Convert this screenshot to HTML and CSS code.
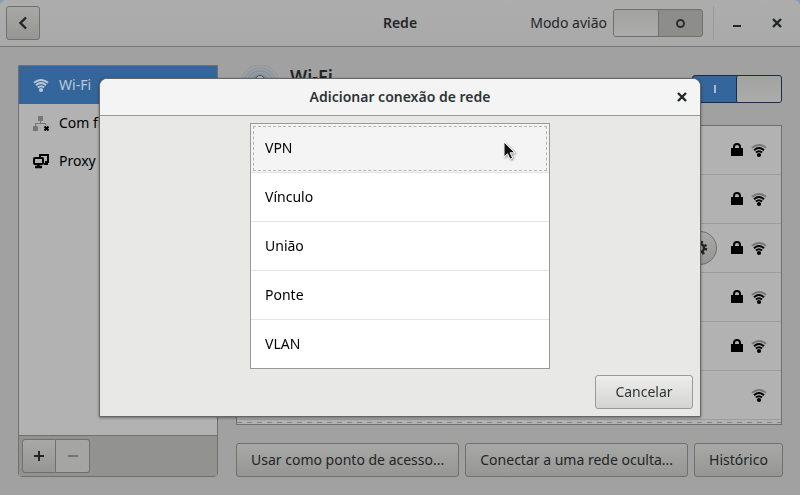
FILE: index.html
```html
<!DOCTYPE html>
<html lang="pt-BR">
<head>
<meta charset="utf-8">
<title>Rede</title>
<link rel="stylesheet" href="styles.css">
</head>
<body>
<svg class="defs" aria-hidden="true">
  <symbol id="wifi" viewBox="0 0 16 16">
    <circle cx="8" cy="13" r="2.100" fill="currentColor"/>
    <g fill="none" stroke="currentColor" stroke-width="2">
      <path d="M4.900 10.600Q8 8 11.100 10.600"/>
      <path d="M3 8.200Q8 3.900 13 8.200"/>
      <path class="outer" d="M1 5.700Q8 .2 15 5.700"/>
    </g>
  </symbol>
  <symbol id="lock" viewBox="0 0 14 16">
    <path d="M4 7V5a3 3 0 0 1 6 0v2" fill="none" stroke="currentColor" stroke-width="2"/>
    <path d="M1 6h12v8H1z" fill="currentColor"/>
  </symbol>
</svg>

<div class="window">
  <header class="titlebar">
    <div class="start">
      <button class="btn square" aria-label="Voltar"><svg width="16" height="16" viewBox="0 0 16 16"><path d="m11 2.500-5.500 5.500 5.500 5.500" fill="none" stroke="currentColor" stroke-width="2.400"/></svg></button>
    </div>
    <h1>Rede</h1>
    <div class="end">
      <label for="airplane">Modo avião</label>
      <input class="switch" type="checkbox" id="airplane">
      <span class="divider"></span>
      <button class="flat" aria-label="Minimizar"><svg width="16" height="16" viewBox="0 0 16 16"><path d="M4 11h8" stroke="currentColor" stroke-width="2"/></svg></button>
      <button class="flat" aria-label="Fechar janela"><svg width="16" height="16" viewBox="0 0 16 16"><path d="m4 4 8 8m0-8-8 8" stroke="currentColor" stroke-width="2.400"/></svg></button>
    </div>
  </header>

  <div class="content">
    <aside class="sidebar">
      <nav>
        <a class="selected" href="#"><svg width="16" height="16"><use href="#wifi"/></svg>Wi-Fi</a>
        <a href="#"><svg width="16" height="16" viewBox="0 0 16 16"><g fill="#777"><path d="M5 1h5v5H5zM0 11h5v5H0zM7 6h1v3H7zM2 8h11v1H2zM2 8h1v3H2zM12 8h1v2h-1z"/></g><path d="m11.500 11.500 4 4m0-4-4 4" stroke="#000" stroke-width="2"/></svg>Com fio</a>
        <a href="#"><svg width="16" height="16" viewBox="0 0 16 16" fill="none" stroke="#000" stroke-width="2"><path d="M7 4V2h8v7h-3"/><rect x="1" y="5" width="9" height="6" rx="1"/><path d="M2 14h7M5.500 11v3" stroke-width="2.400"/><path d="M11 11h4"/></svg>Proxy</a>
      </nav>
      <div class="toolbar">
        <button class="btn square add" aria-label="Adicionar"><svg width="16" height="16" viewBox="0 0 16 16"><path d="M3 8h10M8 3v10" stroke="currentColor" stroke-width="2"/></svg></button>
        <button class="btn square remove" aria-label="Remover" disabled><svg width="16" height="16" viewBox="0 0 16 16"><path d="M3 8h10" stroke="currentColor" stroke-width="2"/></svg></button>
      </div>
    </aside>

    <main>
      <div class="device">
        <svg width="48" height="48" viewBox="0 0 48 48" fill="none"><circle cx="24" cy="19" r="11" fill="#6c7f95" opacity=".45"/><circle cx="24" cy="19" r="8" fill="#4f6a8a" opacity=".55"/><g stroke="#71859c"><circle cx="24" cy="19" r="13" stroke-width="2" opacity=".5"/><circle cx="24" cy="19" r="16" stroke-width="2" opacity=".35"/><circle cx="24" cy="19" r="19" opacity=".35"/></g><circle cx="24" cy="15" r="4.500" fill="#b4b8bb" stroke="#3f4a55"/></svg>
        <h2>Wi-Fi</h2>
        <input class="switch" type="checkbox" checked aria-label="Wi-Fi">
      </div>
      <ul class="networks">
        <li><svg width="14" height="16"><use href="#lock"/></svg><svg width="16" height="16"><use href="#wifi"/></svg></li>
        <li><svg width="14" height="16"><use href="#lock"/></svg><svg width="16" height="16"><use href="#wifi"/></svg></li>
        <li><button class="btn gear" aria-label="Opções"><svg width="16" height="16" viewBox="0 0 16 16" fill="none" stroke="currentColor"><circle cx="8" cy="8" r="4" stroke-width="2.500"/><circle cx="8" cy="8" r="6" stroke-width="2.500" stroke-dasharray="2.300 2.410"/></svg></button><svg width="14" height="16"><use href="#lock"/></svg><svg width="16" height="16"><use href="#wifi"/></svg></li>
        <li><svg width="14" height="16"><use href="#lock"/></svg><svg width="16" height="16"><use href="#wifi"/></svg></li>
        <li><svg width="14" height="16"><use href="#lock"/></svg><svg width="16" height="16"><use href="#wifi"/></svg></li>
        <li><svg width="16" height="16"><use href="#wifi"/></svg></li>
      </ul>
      <div class="actions">
        <button class="btn">Usar como ponto de acesso...</button>
        <button class="btn">Conectar a uma rede oculta...</button>
        <button class="btn">Histórico</button>
      </div>
    </main>
  </div>
</div>

<div class="overlay">
  <section class="dialog" role="dialog" aria-labelledby="dialog-title">
    <header>
      <h2 id="dialog-title">Adicionar conexão de rede</h2>
      <button class="flat" aria-label="Fechar"><svg width="16" height="16" viewBox="0 0 16 16"><path d="m4 4 8 8m0-8-8 8" stroke="currentColor" stroke-width="2.400"/></svg></button>
    </header>
    <div class="dialog-body">
      <div class="types">
        <button class="focused">VPN</button>
        <button>Vínculo</button>
        <button>União</button>
        <button>Ponte</button>
        <button>VLAN</button>
      </div>
      <button class="btn cancel">Cancelar</button>
    </div>
  </section>
</div>
<svg class="pointer" width="14" height="20" viewBox="0 0 14 20" aria-hidden="true"><path d="M1 1v15l3.500-3.200 2.500 5.400 2.600-1.200-2.500-5.200H12z" fill="#111" stroke="#fff"/></svg>
</body>
</html>
```

FILE: styles.css
```css
*, *::before, *::after { box-sizing: border-box; }

body {
  margin: 0;
  background: #7f9bb8;
  color: #222627;
  font: 14px/20px "Noto Sans", "Open Sans", sans-serif;
}

button { font: inherit; color: inherit; }
h1, h2, ul { margin: 0; padding: 0; }
h1, h2 { font-size: 14px; font-weight: 600; }
svg { display: block; flex: none; }
.defs { position: absolute; width: 0; height: 0; }
.outer { stroke: var(--outer-arc, currentColor); }

.window {
  display: flex;
  flex-direction: column;
  min-height: 100vh;
  border-radius: 6px 6px 0 0;
  background: #a1a1a1;
}

.titlebar {
  display: grid;
  grid-template-columns: 1fr auto 1fr;
  align-items: center;
  height: 47px;
  padding: 0 6px;
  background: linear-gradient(#adadad, #a9a9a9);
  border-bottom: 1px solid #777;
  border-radius: 6px 6px 0 0;
}

.end {
  display: flex;
  align-items: center;
  justify-content: flex-end;
}

.end label { margin-right: 6px; }
.divider { width: 1px; height: 34px; margin: 0 6px 0 10px; background: #999; }

.btn {
  height: 34px;
  padding: 0 14px;
  border: 1px solid #70706d;
  border-radius: 3px;
  background: linear-gradient(#a8a8a7, #969694);
  white-space: nowrap;
}

.square {
  display: grid;
  place-items: center;
  width: 34px;
  padding: 0;
}

.flat {
  display: grid;
  place-items: center;
  width: 34px;
  height: 34px;
  padding: 0;
  border: 0;
  background: none;
}

.flat + .flat { margin-left: 6px; }

.switch {
  appearance: none;
  display: flex;
  align-items: center;
  width: 90px;
  height: 28px;
  margin: 0;
  border: 1px solid #70706d;
  border-radius: 3px;
  background: #8d8d8b;
}

.switch::before {
  content: "";
  width: 45px;
  height: 26px;
  border-right: 1px solid #70706d;
  border-radius: 2px;
  background: linear-gradient(#a2a2a1, #acacac);
}

.switch::after {
  content: "";
  width: 9px;
  height: 9px;
  margin: 0 auto;
  border: 2px solid #2b2e2f;
  border-radius: 50%;
}

.switch:checked {
  flex-direction: row-reverse;
  border-color: #1a2d45;
  background: #34659b;
}

.switch:checked::before {
  border-right: 0;
  border-left: 1px solid #1a2d45;
}

.switch:checked::after {
  width: 2px;
  height: 8px;
  border: 0;
  border-radius: 0;
  background: #a9bdd3;
}

.content {
  display: flex;
  flex: 1;
  gap: 18px;
  padding: 18px;
}

.sidebar {
  display: flex;
  flex-direction: column;
  width: 200px;
  border: 1px solid #70706d;
  border-radius: 0 0 4px 4px;
  background: #b2b2b2;
}

nav { flex: 1; }

nav a {
  display: flex;
  align-items: center;
  gap: 10px;
  height: 38px;
  padding-left: 14px;
  color: #000;
  text-decoration: none;
}

nav .selected { background: #34659b; color: #bbc9d8; }

.toolbar {
  display: flex;
  padding: 3px;
  border-top: 1px solid #70706d;
  background: #929290;
}

.add { border-radius: 3px 0 0 3px; }
.remove { border-left: 0; border-radius: 0 3px 3px 0; background: #a5a5a4; color: #707273; }

main {
  display: flex;
  flex: 1;
  flex-direction: column;
  min-width: 0;
}

.device {
  display: flex;
  align-items: flex-start;
  height: 60px;
}

.device h2 { flex: 1; margin-left: 6px; font-size: 18px; line-height: 22px; }
.device .switch { margin-top: 10px; }

.networks {
  --outer-arc: #777;
  flex: 1;
  border: 1px solid #70706d;
  background: #b2b2b2;
  list-style: none;
}

.networks li {
  display: flex;
  align-items: center;
  justify-content: flex-end;
  gap: 7px;
  height: 49px;
  padding-right: 14px;
  border-bottom: 1px solid #9d9d9d;
  color: #000;
}

.networks::after {
  content: "";
  display: block;
  height: 1px;
  margin-top: 2px;
  background: repeating-linear-gradient(90deg, #858585 0 5px, transparent 5px 10px);
}

.gear {
  display: grid;
  place-items: center;
  width: 34px;
  margin-right: 6px;
  padding: 0;
  border-radius: 50%;
  color: #222627;
}

.actions {
  display: flex;
  gap: 6px;
  margin-top: 18px;
}

.actions .btn { flex: 1 1 auto; }

.overlay {
  position: fixed;
  inset: 0;
  display: grid;
  place-items: center;
}

.dialog {
  width: 602px;
  max-width: 100%;
  border: 1px solid #666;
  border-radius: 8px 8px 0 0;
  background: #e8e8e6;
  box-shadow: 0 1px 3px #0006;
}

.dialog header {
  display: grid;
  grid-template-columns: 34px 1fr 34px;
  align-items: center;
  height: 37px;
  padding: 0 1px;
  border-bottom: 1px solid #999;
  border-radius: 7px 7px 0 0;
  background: #f4f4f4;
  text-align: center;
}

.dialog h2 { grid-column: 2; color: #2e3436; }

.dialog-body {
  display: flex;
  flex-direction: column;
  padding: 7px;
}

.types {
  align-self: center;
  width: 300px;
  max-width: 100%;
  border: 1px solid #999a98;
  background: #fff;
}

.types button {
  display: block;
  width: 100%;
  height: 49px;
  padding: 0 14px;
  border: 0;
  border-bottom: 1px solid #e4e4e4;
  background: none;
  color: #000;
  text-align: left;
}

.types button:last-child { height: 48px; border-bottom: 0; }

.types .focused {
  background: #f4f4f4;
  outline: 1px dashed #b4b4b4;
  outline-offset: -3px;
}

.cancel {
  align-self: flex-end;
  min-width: 98px;
  margin-top: 6px;
  border-color: #999a98;
  background: linear-gradient(#ededec, #d4d4d1);
  color: #2e3436;
}

.pointer {
  position: fixed;
  left: 503px;
  top: 141px;
  filter: drop-shadow(1px 1px 1px #0006);
}
```
